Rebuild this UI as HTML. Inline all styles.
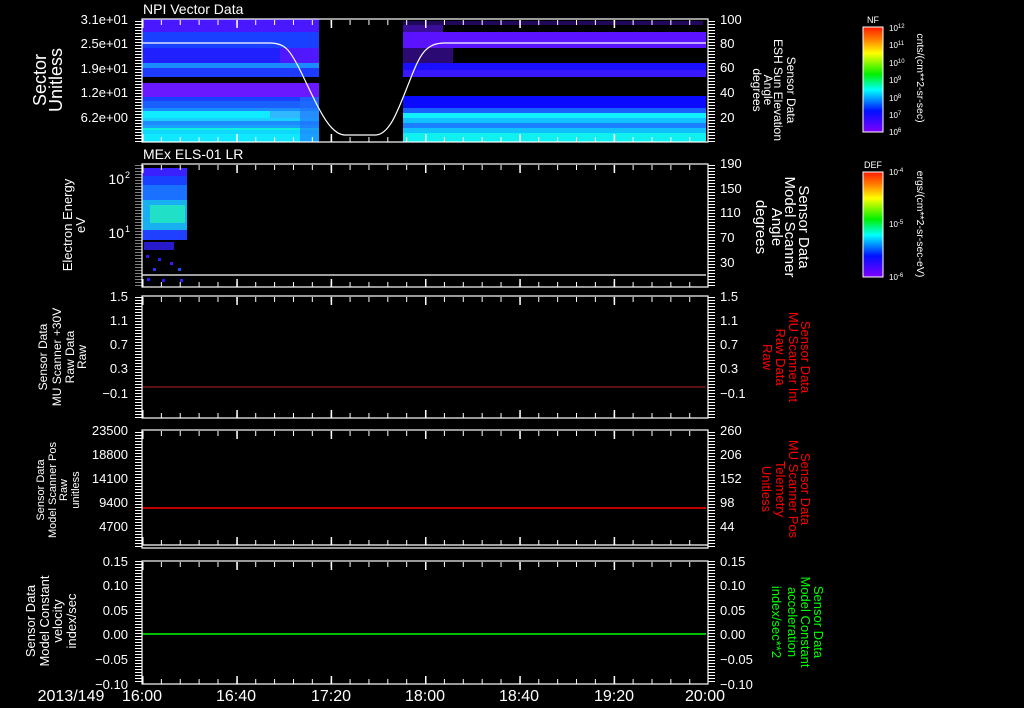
<!DOCTYPE html>
<html><head><meta charset="utf-8"><style>
html,body{margin:0;padding:0;background:#000;width:1024px;height:708px;overflow:hidden}
svg{display:block}
text{font-family:"Liberation Sans",sans-serif}
</style></head><body>
<svg width="1024" height="708" viewBox="0 0 1024 708" xmlns="http://www.w3.org/2000/svg" fill="#fff">
<defs>
<pattern id="ly" x="0" y="0" width="10" height="3" patternUnits="userSpaceOnUse"><rect x="0" y="0" width="10" height="1" fill="#fff"/></pattern>
<pattern id="xt" x="142" y="0" width="18.87" height="10" patternUnits="userSpaceOnUse"><rect x="0" y="0" width="1" height="10" fill="#fff"/></pattern>
<pattern id="xT" x="142" y="0" width="94.33" height="10" patternUnits="userSpaceOnUse"><rect x="0" y="0" width="1.5" height="10" fill="#fff"/></pattern>
<linearGradient id="cb" x1="0" y1="0" x2="0" y2="1">
<stop offset="0" stop-color="#ff1a00"/><stop offset="0.12" stop-color="#ff8000"/><stop offset="0.25" stop-color="#ffff00"/><stop offset="0.45" stop-color="#00f000"/><stop offset="0.6" stop-color="#00ffff"/><stop offset="0.8" stop-color="#0010ff"/><stop offset="1" stop-color="#8000ff"/>
</linearGradient>
</defs>

<!-- Panel 1 spectrogram -->
<g>
<rect x="142" y="19" width="177" height="13" fill="#4a18ff"/>
<rect x="142" y="32" width="177" height="16" fill="#1a40ff"/>
<rect x="142" y="48" width="177" height="15" fill="#2020ff"/>
<rect x="280" y="48" width="39" height="15" fill="#5018ff"/>
<rect x="142" y="63" width="177" height="5" fill="#1a8cff"/>
<rect x="142" y="68" width="177" height="9" fill="#1f3aff"/>
<rect x="142" y="83" width="177" height="14" fill="#6a18ff"/>
<rect x="142" y="97" width="177" height="4" fill="#1a40ff"/>
<rect x="142" y="101" width="177" height="7" fill="#1a60ff"/>
<rect x="142" y="108" width="177" height="3" fill="#1a8cff"/>
<rect x="142" y="111" width="177" height="7" fill="#10ecff"/>
<rect x="270" y="111" width="49" height="7" fill="#30b8ff"/>
<rect x="142" y="118" width="177" height="3" fill="#1ad0ff"/>
<rect x="142" y="121" width="177" height="4" fill="#1a8cff"/>
<rect x="142" y="125" width="177" height="3" fill="#1aa0ff"/>
<rect x="142" y="128" width="177" height="2" fill="#10f0e0"/>
<rect x="142" y="130" width="177" height="4" fill="#10d8ff"/>
<rect x="142" y="134" width="177" height="8" fill="#10e8ff"/>
<rect x="300" y="97" width="19" height="45" fill="#2070ff" opacity="0.6"/>
<!-- right part -->
<rect x="403" y="21" width="300" height="4" fill="#5a18ff" opacity="0.35"/>
<rect x="403" y="25" width="40" height="7" fill="#6018ff" opacity="0.6"/>
<rect x="403" y="32" width="303" height="16" fill="#5a12ff"/>
<rect x="403" y="48" width="50" height="15" fill="#6018ff" opacity="0.45"/>
<rect x="403" y="63" width="303" height="14" fill="#1a10ff"/>
<rect x="403" y="70" width="303" height="7" fill="#3a18ff"/>
<rect x="403" y="96" width="303" height="12" fill="#0a0aff"/>
<rect x="403" y="108" width="303" height="5" fill="#1a60ff"/>
<rect x="403" y="113" width="303" height="5" fill="#10f0ff"/>
<rect x="403" y="118" width="303" height="5" fill="#10c0ff"/>
<rect x="403" y="123" width="303" height="5" fill="#1a80ff"/>
<rect x="403" y="128" width="303" height="5" fill="#10c0ff"/>
<rect x="403" y="133" width="303" height="9" fill="#10f0f0"/>
<path d="M142 43 L270 43 C285 43 290 50 300 70 C315 100 328 135 345 135 L375 135 C390 135 398 110 410 80 C420 55 425 43 445 43 L706 43" stroke="#fff" stroke-width="1.2" fill="none"/>
</g>

<!-- Panel 2 data -->
<g>
<rect x="142" y="168" width="45" height="72" fill="#1a40ff"/>
<rect x="142" y="168" width="45" height="8" fill="#3a20ff"/>
<rect x="142" y="185" width="45" height="15" fill="#1a70ff"/>
<rect x="142" y="200" width="45" height="30" fill="#18b0f0"/>
<rect x="150" y="205" width="35" height="18" fill="#20e0c8"/>
<rect x="142" y="230" width="45" height="10" fill="#2040ff"/>
<rect x="144" y="242" width="30" height="8" fill="#3020ff" opacity="0.8"/>
<rect x="146" y="255" width="3" height="3" fill="#3a10ff"/><rect x="158" y="258" width="3" height="3" fill="#2020ff"/><rect x="170" y="262" width="3" height="3" fill="#5010ff"/><rect x="153" y="268" width="3" height="3" fill="#2a30ff"/><rect x="178" y="268" width="3" height="3" fill="#1a50ff"/><rect x="147" y="278" width="3" height="3" fill="#2020ff"/><rect x="162" y="279" width="3" height="3" fill="#3010ff"/><rect x="180" y="279" width="3" height="3" fill="#2a20ff"/>
<line x1="142" y1="275" x2="706" y2="275" stroke="#fff" stroke-width="1.2"/>
</g>

<!-- data lines -->
<line x1="142" y1="387" x2="706" y2="387" stroke="#b02020" stroke-width="1"/>
<line x1="142" y1="508" x2="706" y2="508" stroke="#ff0000" stroke-width="1.5"/>
<line x1="142" y1="634" x2="706" y2="634" stroke="#00ff00" stroke-width="1.5"/>

<!-- Frames and ticks -->
<g fill="none" stroke="#fff" stroke-width="1.2">
<rect x="142" y="19" width="566" height="123"/>
<rect x="142" y="164" width="566" height="123"/>
<rect x="142" y="296" width="566" height="122"/>
<rect x="142" y="430" width="566" height="118"/>
<line x1="142" y1="545" x2="708" y2="545"/>
<rect x="142" y="561" width="566" height="123"/>
</g>
<g>
<rect x="135" y="19" width="7" height="123" fill="url(#ly)"/>
<rect x="135" y="164" width="7" height="123" fill="url(#ly)" opacity="0.5"/>
<rect x="135" y="296" width="7" height="122" fill="url(#ly)"/>
<rect x="135" y="430" width="7" height="118" fill="url(#ly)"/>
<rect x="135" y="561" width="7" height="123" fill="url(#ly)"/>
<rect x="708" y="19" width="7" height="123" fill="url(#ly)"/>
<rect x="708" y="164" width="7" height="123" fill="url(#ly)"/>
<rect x="708" y="296" width="7" height="122" fill="url(#ly)"/>
<rect x="708" y="430" width="7" height="118" fill="url(#ly)"/>
<rect x="708" y="561" width="7" height="123" fill="url(#ly)"/>
<rect x="142" y="20" width="566" height="5" fill="url(#xt)"/><rect x="142" y="20" width="566" height="8" fill="url(#xT)"/>
<rect x="142" y="137" width="566" height="5" fill="url(#xt)"/><rect x="142" y="134" width="566" height="8" fill="url(#xT)"/>
<rect x="142" y="165" width="566" height="5" fill="url(#xt)"/><rect x="142" y="165" width="566" height="8" fill="url(#xT)"/>
<rect x="142" y="282" width="566" height="5" fill="url(#xt)"/><rect x="142" y="279" width="566" height="8" fill="url(#xT)"/>
<rect x="142" y="297" width="566" height="5" fill="url(#xt)"/><rect x="142" y="297" width="566" height="8" fill="url(#xT)"/>
<rect x="142" y="413" width="566" height="5" fill="url(#xt)"/><rect x="142" y="410" width="566" height="8" fill="url(#xT)"/>
<rect x="142" y="431" width="566" height="5" fill="url(#xt)"/><rect x="142" y="431" width="566" height="8" fill="url(#xT)"/>
<rect x="142" y="540" width="566" height="5" fill="url(#xt)"/><rect x="142" y="537" width="566" height="8" fill="url(#xT)"/>
<rect x="142" y="562" width="566" height="5" fill="url(#xt)"/><rect x="142" y="562" width="566" height="8" fill="url(#xT)"/>
<rect x="142" y="679" width="566" height="5" fill="url(#xt)"/><rect x="142" y="676" width="566" height="8" fill="url(#xT)"/>
</g>

<text x="143" y="14" font-size="14">NPI Vector Data</text>
<text x="143" y="159" font-size="14">MEx ELS-01 LR</text>

<g font-size="13" text-anchor="end">
<text x="128" y="24">3.1e+01</text><text x="128" y="48">2.5e+01</text><text x="128" y="73">1.9e+01</text><text x="128" y="97">1.2e+01</text><text x="128" y="122">6.2e+00</text>
<text x="124" y="184" font-size="14">10</text><text x="130" y="178" font-size="9">2</text>
<text x="124" y="238" font-size="14">10</text><text x="130" y="232" font-size="9">1</text>
<text x="128" y="301">1.5</text><text x="128" y="325">1.1</text><text x="128" y="349">0.7</text><text x="128" y="373">0.3</text><text x="128" y="398">−0.1</text>
<text x="128" y="435">23500</text><text x="128" y="459">18800</text><text x="128" y="483">14100</text><text x="128" y="507">9400</text><text x="128" y="531">4700</text>
<text x="128" y="566">0.15</text><text x="128" y="590">0.10</text><text x="128" y="615">0.05</text><text x="128" y="639">0.00</text><text x="128" y="664">−0.05</text><text x="128" y="689">−0.10</text>
</g>
<g font-size="13">
<text x="720" y="24">100</text><text x="720" y="48">80</text><text x="720" y="72">60</text><text x="720" y="97">40</text><text x="720" y="122">20</text>
<text x="720" y="168">190</text><text x="720" y="193">150</text><text x="720" y="217">110</text><text x="720" y="242">70</text><text x="720" y="267">30</text>
<text x="720" y="301">1.5</text><text x="720" y="325">1.1</text><text x="720" y="349">0.7</text><text x="720" y="373">0.3</text><text x="720" y="398">−0.1</text>
<text x="720" y="435">260</text><text x="720" y="459">206</text><text x="720" y="483">152</text><text x="720" y="507">98</text><text x="720" y="531">44</text>
<text x="720" y="566">0.15</text><text x="720" y="590">0.10</text><text x="720" y="615">0.05</text><text x="720" y="639">0.00</text><text x="720" y="664">−0.05</text><text x="720" y="689">−0.10</text>
</g>

<g font-size="16" text-anchor="middle">
<text x="71" y="701">2013/149</text>
<text x="142" y="701">16:00</text><text x="236" y="701">16:40</text><text x="331" y="701">17:20</text><text x="425" y="701">18:00</text><text x="519" y="701">18:40</text><text x="614" y="701">19:20</text><text x="705" y="701">20:00</text>
</g>

<g text-anchor="middle">
<g transform="translate(0,80) rotate(-90)" font-size="18"><text x="0" y="46">Sector</text><text x="0" y="62">Unitless</text></g>
<g transform="translate(0,225) rotate(-90)" font-size="13"><text x="0" y="72">Electron Energy</text><text x="0" y="85">eV</text></g>
<g transform="translate(0,357) rotate(-90)" font-size="12"><text x="0" y="47">Sensor Data</text><text x="0" y="61">MU Scanner +30V</text><text x="0" y="74">Raw Data</text><text x="0" y="86">Raw</text></g>
<g transform="translate(0,490) rotate(-90)" font-size="11"><text x="0" y="44">Sensor Data</text><text x="0" y="56">Model Scanner Pos</text><text x="0" y="67">Raw</text><text x="0" y="79">unitless</text></g>
<g transform="translate(0,621) rotate(-90)" font-size="13"><text x="0" y="35">Sensor Data</text><text x="0" y="49">Model Constant</text><text x="0" y="62">velocity</text><text x="0" y="76">index/sec</text></g>
</g>

<g text-anchor="middle">
<g transform="translate(0,90) rotate(90)" font-size="12"><text x="0" y="-787">Sensor Data</text><text x="0" y="-774">ESH Sun Elevation</text><text x="0" y="-764">Angle</text><text x="0" y="-753">degrees</text></g>
<g transform="translate(0,227) rotate(90)" font-size="15"><text x="0" y="-799">Sensor Data</text><text x="0" y="-785">Model Scanner</text><text x="0" y="-772">Angle</text><text x="0" y="-756">degrees</text></g>
<g transform="translate(0,357) rotate(90)" font-size="13" fill="#ff0000"><text x="0" y="-801">Sensor Data</text><text x="0" y="-789">MU Scanner Int</text><text x="0" y="-776">Raw Data</text><text x="0" y="-763">Raw</text></g>
<g transform="translate(0,489) rotate(90)" font-size="13" fill="#ff0000"><text x="0" y="-801">Sensor Data</text><text x="0" y="-789">MU Scanner Pos</text><text x="0" y="-776">Telemetry</text><text x="0" y="-762">Unitless</text></g>
<g transform="translate(0,622) rotate(90)" font-size="13" fill="#00ff00"><text x="0" y="-814">Sensor Data</text><text x="0" y="-801">Model Constant</text><text x="0" y="-788">acceleration</text><text x="0" y="-772">index/sec**2</text></g>
</g>

<rect x="863" y="27" width="20" height="105" fill="url(#cb)" stroke="#fff" stroke-width="1"/>
<rect x="863" y="172" width="20" height="105" fill="url(#cb)" stroke="#fff" stroke-width="1"/>
<text x="873" y="23" font-size="9" text-anchor="middle">NF</text>
<text x="873" y="168" font-size="9" text-anchor="middle">DEF</text>
<g font-size="8">
<text x="889" y="31">10<tspan dy="-3" font-size="6">12</tspan></text>
<text x="889" y="48">10<tspan dy="-3" font-size="6">11</tspan></text>
<text x="889" y="66">10<tspan dy="-3" font-size="6">10</tspan></text>
<text x="889" y="83">10<tspan dy="-3" font-size="6">9</tspan></text>
<text x="889" y="101">10<tspan dy="-3" font-size="6">8</tspan></text>
<text x="889" y="118">10<tspan dy="-3" font-size="6">7</tspan></text>
<text x="889" y="135">10<tspan dy="-3" font-size="6">6</tspan></text>
<text x="889" y="175">10<tspan dy="-3" font-size="6">-4</tspan></text>
<text x="889" y="227">10<tspan dy="-3" font-size="6">-5</tspan></text>
<text x="889" y="280">10<tspan dy="-3" font-size="6">-6</tspan></text>
</g>
<g font-size="10.5" text-anchor="middle">
<g transform="translate(0,78) rotate(90)"><text x="0" y="-917">cnts/(cm**2-sr-sec)</text></g>
<g transform="translate(0,224) rotate(90)"><text x="0" y="-917">ergs/(cm**2-sr-sec-eV)</text></g>
</g>
</svg>
</body></html>
